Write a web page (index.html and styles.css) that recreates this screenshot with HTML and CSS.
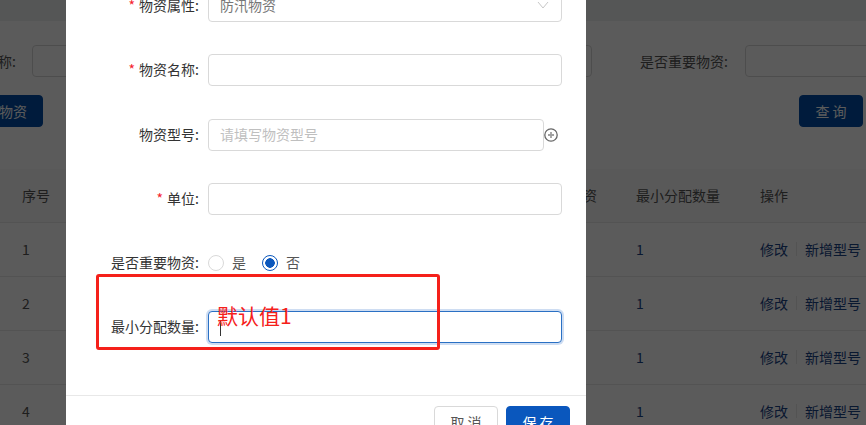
FILE: index.html
```html
<!DOCTYPE html>
<html lang="en">
<head>
<meta charset="UTF-8">
<meta name="viewport" content="width=device-width, initial-scale=1.0">
<title>物资管理</title>
<link rel="stylesheet" href="styles.css">
</head>
<body>

<div class="page">
    <div class="topbar"></div>

    <div class="filters">
        <label class="filter-name">物资名称:</label>
        <div class="filter-input first"></div>
        <div class="filter-input middle"></div>
        <label class="filter-key">是否重要物资:</label>
        <div class="filter-input last"></div>
    </div>

    <div class="actions">
        <button class="btn primary add">新增物资</button>
        <button class="btn primary search">查 询</button>
    </div>

    <div class="table">
        <div class="row head">
            <span class="cell-no">序号</span>
            <span class="cell-key">是否重要物资</span>
            <span>最小分配数量</span>
            <span>操作</span>
        </div>
        <div class="row">
            <span class="cell-no">1</span>
            <span class="cell-key"></span>
            <span class="link">1</span>
            <span class="ops"><a>修改</a><i></i><a>新增型号</a></span>
        </div>
        <div class="row">
            <span class="cell-no">2</span>
            <span class="cell-key"></span>
            <span class="link">1</span>
            <span class="ops"><a>修改</a><i></i><a>新增型号</a></span>
        </div>
        <div class="row">
            <span class="cell-no">3</span>
            <span class="cell-key"></span>
            <span class="link">1</span>
            <span class="ops"><a>修改</a><i></i><a>新增型号</a></span>
        </div>
        <div class="row">
            <span class="cell-no">4</span>
            <span class="cell-key"></span>
            <span class="link">1</span>
            <span class="ops"><a>修改</a><i></i><a>新增型号</a></span>
        </div>
    </div>
</div>

<div class="mask"></div>

<div class="modal">
    <div class="form">
        <div class="field">
            <label class="required">物资属性:</label>
            <div class="control select">
                <span>防汛物资</span>
                <svg width="12" height="8" viewBox="0 0 12 8"><path d="M1 1l5 6 5-6" fill="none" stroke="#c8c8c8" stroke-width="1"/></svg>
            </div>
        </div>
        <div class="field">
            <label class="required">物资名称:</label>
            <input class="control" type="text">
        </div>
        <div class="field">
            <label>物资型号:</label>
            <input class="control short" type="text" placeholder="请填写物资型号">
            <svg class="add-icon" width="16" height="16" viewBox="0 0 16 16">
                <circle cx="8" cy="8" r="6.2" fill="none" stroke="#666" stroke-width="1.3"/>
                <path d="M8 5v6M5 8h6" stroke="#a0a0a0" stroke-width="1.8"/>
            </svg>
        </div>
        <div class="field">
            <label class="required">单位:</label>
            <input class="control" type="text">
        </div>
        <div class="field">
            <label>是否重要物资:</label>
            <div class="radios">
                <span class="radio"></span><span class="radio-text">是</span>
                <span class="radio on"></span><span class="radio-text">否</span>
            </div>
        </div>
        <div class="field">
            <label>最小分配数量:</label>
            <div class="focus-wrap">
                <input class="control focused" type="text">
                <span class="caret"></span>
            </div>
        </div>
    </div>
    <div class="modal-footer">
        <button class="btn">取 消</button>
        <button class="btn primary">保 存</button>
    </div>
</div>

<div class="note"><span>默认值1</span></div>

</body>
</html>
```

FILE: styles.css
```css
* {
    box-sizing: border-box;
}

html, body {
    margin: 0;
    height: 425px;
    overflow: hidden;
}

body {
    position: relative;
    font-family: "Noto Sans CJK SC", "Liberation Sans", sans-serif;
    font-size: 14px;
    color: #333;
    background-color: #fff;
}

.page {
    height: 425px;
    overflow: hidden;
    color: #555;
}

.topbar {
    height: 21px;
    background-color: #eff0f1;
}

.filters {
    display: flex;
    align-items: center;
    height: 32px;
    margin-top: 24px;
    margin-left: -44px;
}

.filter-name {
    flex: none;
    width: 61px;
    white-space: nowrap;
}

.filter-input {
    flex: none;
    height: 32px;
    border: 1px solid #d9d9d9;
    border-radius: 4px;
}

.filter-input.first {
    width: 250px;
    margin-left: 15px;
}

.filter-input.middle {
    width: 250px;
    margin-left: 60px;
}

.filter-key {
    flex: none;
    width: 90px;
    margin-left: 48px;
    white-space: nowrap;
}

.filter-input.last {
    width: 200px;
    margin-left: 15px;
}

.actions {
    display: flex;
    justify-content: space-between;
    height: 32px;
    margin-top: 18px;
    margin-left: -45px;
    padding-right: 3px;
}

.btn {
    width: 64px;
    height: 32px;
    padding: 0;
    border: 1px solid #d9d9d9;
    border-radius: 4px;
    background-color: #fff;
    color: #555;
    font-family: inherit;
    font-size: 14px;
}

.btn.primary {
    border-color: #0a57bd;
    background-color: #0a57bd;
    color: #fff;
}

.actions .btn.primary {
    border-color: #004ca8;
    background-color: #004ca8;
}

.btn.add {
    width: 88px;
}

.table {
    margin-top: 42px;
}

.row {
    display: grid;
    grid-template-columns: 513px 123px 124px 1fr;
    align-items: center;
    height: 54px;
    padding-bottom: 2px;
    border-bottom: 1px solid #e8e8e8;
    white-space: nowrap;
}

.row.head {
    background-color: #fafafa;
}

.cell-no {
    padding-left: 22px;
}

.link, .ops a {
    color: #1a4488;
}

.ops {
    display: flex;
    align-items: center;
}

.ops i {
    width: 1px;
    height: 14px;
    margin: 0 8px;
    background-color: #e8e8e8;
}

.mask {
    position: absolute;
    inset: 0;
    background-color: rgba(0, 0, 0, 0.645);
}

.modal {
    position: absolute;
    left: 66px;
    top: -10px;
    width: 520px;
    height: 435px;
    overflow: hidden;
    background-color: #fff;
}

.form {
    display: flex;
    flex-direction: column;
    gap: 32.28px;
    height: 406px;
    border-bottom: 1px solid #e8e8e8;
}

.field {
    display: flex;
    align-items: center;
    height: 32px;
}

.field label {
    width: 133px;
    margin-right: 9px;
    padding-bottom: 2px;
    text-align: right;
    white-space: nowrap;
}

.required::before {
    content: "*";
    margin-right: 4px;
    color: #f5222d;
}

.control {
    display: block;
    width: 354px;
    height: 32px;
    padding: 0 11px 2px;
    border: 1px solid #d9d9d9;
    border-radius: 4px;
    background-color: #fff;
    color: #777;
    font-family: inherit;
    font-size: 14px;
    outline: none;
}

.control::placeholder {
    color: #bfbfbf;
}

.control.short {
    width: 336px;
}

.select {
    display: flex;
    align-items: center;
    justify-content: space-between;
    padding-right: 12px;
}

.add-icon {
    margin-left: -1px;
}

.radios {
    display: flex;
    align-items: center;
}

.radio {
    width: 16px;
    height: 16px;
    border: 1px solid #d9d9d9;
    border-radius: 50%;
}

.radio.on {
    border-color: #0a57bd;
    background: radial-gradient(circle, #0a57bd 0 4.5px, #fff 5px);
}

.radio-text {
    width: 38px;
    padding-bottom: 2px;
    padding-left: 8px;
    color: #555;
}

.focus-wrap {
    position: relative;
}

.control.focused {
    border-color: #2a70c4;
    box-shadow: 0 0 0 2px rgba(10, 87, 189, 0.2);
}

.caret {
    position: absolute;
    left: 12px;
    top: 9px;
    width: 1px;
    height: 16px;
    background-color: #333;
}

.modal-footer {
    display: flex;
    justify-content: flex-end;
    gap: 8px;
    padding: 10px 16px 0 0;
}

.note {
    position: absolute;
    left: 96px;
    top: 274px;
    width: 344px;
    height: 76px;
    border: 3px solid #f5201a;
    border-radius: 3px;
    color: #f5201a;
    font-size: 21px;
    line-height: 28px;
}

.note span {
    position: absolute;
    left: 118px;
    top: 24px;
}
```
